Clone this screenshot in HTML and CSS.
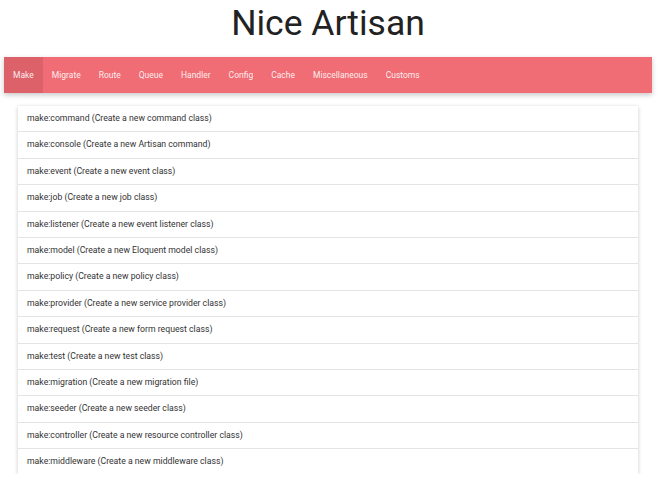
FILE: index.html
```html
<!DOCTYPE html>
<html>
<head>
<meta charset="utf-8">
<link rel="stylesheet" href="styles.css">
</head>
<body>
<h1 class="title">Nice Artisan</h1>
<nav class="nav">
  <a class="nav-item active">Make</a>
  <a class="nav-item">Migrate</a>
  <a class="nav-item">Route</a>
  <a class="nav-item">Queue</a>
  <a class="nav-item">Handler</a>
  <a class="nav-item">Config</a>
  <a class="nav-item">Cache</a>
  <a class="nav-item">Miscellaneous</a>
  <a class="nav-item">Customs</a>
</nav>
<ul class="list">
  <li class="row">make:command (Create a new command class)</li>
  <li class="row">make:console (Create a new Artisan command)</li>
  <li class="row">make:event (Create a new event class)</li>
  <li class="row">make:job (Create a new job class)</li>
  <li class="row">make:listener (Create a new event listener class)</li>
  <li class="row">make:model (Create a new Eloquent model class)</li>
  <li class="row">make:policy (Create a new policy class)</li>
  <li class="row">make:provider (Create a new service provider class)</li>
  <li class="row">make:request (Create a new form request class)</li>
  <li class="row">make:test (Create a new test class)</li>
  <li class="row">make:migration (Create a new migration file)</li>
  <li class="row">make:seeder (Create a new seeder class)</li>
  <li class="row">make:controller (Create a new resource controller class)</li>
  <li class="row">make:middleware (Create a new middleware class)</li>
</ul>
</body>
</html>
```
FILE: styles.css
```css
html, body {
  margin: 0;
  padding: 0;
  background: #ffffff;
  font-family: Roboto, "Liberation Sans", sans-serif;
}
body {
  padding: 0 6px 0 4px;
}
.title {
  margin: 0;
  height: 57px;
  line-height: 46px;
  text-align: center;
  font-size: 35.5px;
  font-weight: 400;
  color: #222222;
}
.nav {
  display: flex;
  height: 36px;
  background: #f06d75;
  box-shadow: 0 2px 5px rgba(0, 0, 0, 0.22);
}
.nav-item {
  display: flex;
  align-items: center;
  padding: 0 9px;
  font-size: 8.5px;
  color: rgba(255, 255, 255, 0.9);
}
.nav-item.active {
  background: #dc6169;
}
.list {
  list-style: none;
  margin: 13px 14px 0 14px;
  padding: 0;
  background: #fff;
  box-shadow: 0 1px 4px rgba(0, 0, 0, 0.22);
}
.row {
  height: 25.4px;
  line-height: 25.4px;
  padding: 0 9px;
  font-size: 8.7px;
  color: #333333;
  border-bottom: 1px solid #e4e4e4;
}
.row:last-child {
  border-bottom: none;
}
```
